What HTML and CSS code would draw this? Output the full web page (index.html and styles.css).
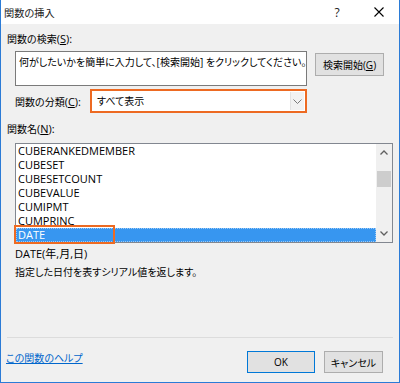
FILE: index.html
```html
<!DOCTYPE html>
<html lang="ja">
<head>
<meta charset="utf-8">
<link rel="stylesheet" href="styles.css">
</head>
<body>
<div class="dialog">
  <div class="titlebar">
    <span class="title">関数の挿入</span>
    <span class="help">?</span>
    <span class="close"><svg width="10" height="10" viewBox="0 0 10 10"><path d="M0.5 0.5 L9.5 9.5 M9.5 0.5 L0.5 9.5" stroke="#000" stroke-width="1.1" fill="none"/></svg></span>
  </div>
  <div class="body">
    <div class="label">関数の検索<span class="mn">(<u>S</u>):</span></div>
    <div class="search-row">
      <div class="textarea">何がしたいかを簡単に入力して、[検索開始] をクリックしてください。</div>
      <div class="btn search-btn">検索開始(<u>G</u>)</div>
    </div>
    <div class="cat-row">
      <span class="cat-label">関数の分類<span class="mn">(<u>C</u>):</span></span>
      <div class="select">
        <span class="select-value">すべて表示</span>
        <span class="drop"><svg width="9" height="5" viewBox="0 0 9 5"><path d="M0.5 0.5 L4.5 4.5 L8.5 0.5" stroke="#7a7a7a" stroke-width="1" fill="none"/></svg></span>
      </div>
    </div>
    <div class="label name-label">関数名<span class="mn">(<u>N</u>):</span></div>
    <div class="list">
      <ul class="items">
        <li>CUBERANKEDMEMBER</li>
        <li>CUBESET</li>
        <li>CUBESETCOUNT</li>
        <li>CUBEVALUE</li>
        <li>CUMIPMT</li>
        <li>CUMPRINC</li>
        <li class="selected">DATE</li>
      </ul>
      <div class="scrollbar">
        <span class="arrow"><svg width="8" height="5" viewBox="0 0 8 5"><path d="M0.5 4.5 L4 1 L7.5 4.5" stroke="#606060" stroke-width="1.3" fill="none"/></svg></span>
        <span class="thumb"></span>
        <span class="spacer"></span>
        <span class="arrow"><svg width="8" height="5" viewBox="0 0 8 5"><path d="M0.5 0.5 L4 4 L7.5 0.5" stroke="#606060" stroke-width="1.3" fill="none"/></svg></span>
      </div>
      <div class="mark"></div>
    </div>
    <div class="desc">
      <div class="syntax">DATE(年,月,日)</div>
      <div class="explain">指定した日付を表すシリアル値を返します。</div>
    </div>
    <div class="separator"></div>
    <div class="footer">
      <a class="link" href="#">この関数のヘルプ</a>
      <div class="btn ok-btn">OK</div>
      <div class="btn cancel-btn">キャンセル</div>
    </div>
  </div>
</div>
</body>
</html>
```

FILE: styles.css
```css
* { box-sizing: border-box; }
html, body { margin: 0; padding: 0; background: #f0f0f0; }
body {
  font-family: "Open Sans", "Noto Sans CJK JP", sans-serif;
  font-size: 10px;
  color: #000;
  font-feature-settings: "palt";
}
u { text-decoration: underline; text-underline-offset: 1px; }
.mn { font-size: 11px; }
.dialog {
  width: 400px;
  height: 383px;
  border: 1px solid #2b7bd6;
  border-top: none;
  display: flex;
  flex-direction: column;
  background: #f0f0f0;
}
.titlebar {
  height: 24px;
  background: #fff;
  display: flex;
  align-items: center;
  padding-left: 3px;
  padding-right: 15px;
  font-size: 10.2px;
  color: #222;
}
.title { flex: 1; }
.help { width: 12px; text-align: center; font-size: 12px; margin-right: 31px; }
.close { width: 10px; height: 10px; display: flex; }
.body {
  flex: 1;
  padding: 0 6px;
  display: flex;
  flex-direction: column;
}
.label { line-height: 14px; margin-top: 8px; }
.search-row { display: flex; margin-top: 5px; padding-left: 8px; align-items: flex-start; }
.textarea {
  width: 292px;
  height: 35px;
  background: #fff;
  border: 1px solid #7a7a7a;
  padding: 3px 3px;
  line-height: 14px;
  white-space: nowrap;
  overflow: hidden;
}
.btn {
  background: #e1e1e1;
  border: 1px solid #adadad;
  display: flex;
  align-items: center;
  justify-content: center;
  height: 23px;
}
.search-btn { width: 69px; margin-left: 8px; margin-top: 2px; }
.cat-row { display: flex; align-items: center; margin-top: 3px; padding-left: 8px; height: 24px; }
.cat-label { width: 75px; }
.select {
  width: 217px;
  height: 24px;
  background: #fff;
  border: 2px solid #ed6a22;
  display: flex;
  align-items: stretch;
}
.select-value { flex: 1; padding-left: 5px; line-height: 20px; }
.drop {
  width: 14px;
  margin: 1px 1px 1px 0;
  border-left: 1px solid #e3e3e3;
  background: #f2f2f2;
  display: flex;
  align-items: center;
  justify-content: center;
}
.name-label { margin-top: 9px; }
.list {
  position: relative;
  margin-top: 7px;
  margin-left: 8px;
  height: 100px;
  background: #fff;
  border: 1px solid #828790;
  display: flex;
}
.items {
  list-style: none;
  margin: 0;
  padding: 0;
  flex: 1;
}
.items li {
  height: 14px;
  line-height: 14px;
  padding-left: 2px;
  font-size: 11px;
}
.items li.selected {
  background: #3796f0;
  color: #fff;
  outline: 1px dotted #9cc9f5;
  outline-offset: -1px;
}
.scrollbar {
  width: 16px;
  background: #f0f0f0;
  display: flex;
  flex-direction: column;
}
.arrow { height: 17px; display: flex; align-items: center; justify-content: center; }
.thumb { height: 16px; margin: 10px 1px 0 1px; background: #cdcdcd; }
.spacer { flex: 1; }
.mark {
  position: absolute;
  left: -2px;
  top: 81px;
  width: 101px;
  height: 19px;
  border: 2px solid #ed6a22;
}
.desc { margin-top: 4px; padding-left: 8px; }
.syntax { line-height: 14px; font-size: 11px; }
.explain { line-height: 14px; margin-top: 4px; }
.separator { height: 1px; background: #dcdcdc; margin-top: 58px; }
.footer { display: flex; align-items: flex-start; margin-top: 13px; }
.link {
  flex: 1;
  color: #0066cc;
  text-decoration: underline;
  line-height: 14px;
  margin-left: -1px;
}
.ok-btn { width: 68px; height: 22px; border-color: #0078d7; }
.cancel-btn { width: 59px; height: 22px; margin-left: 9px; margin-right: 10px; }
```
